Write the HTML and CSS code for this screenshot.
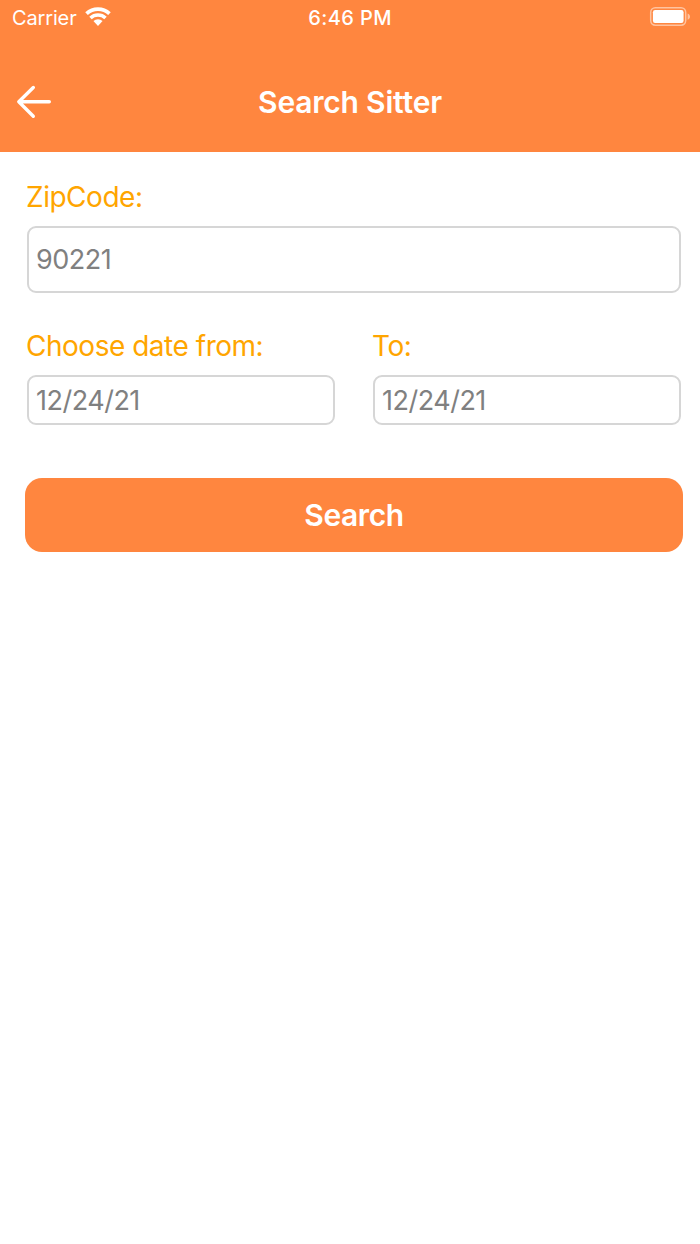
FILE: index.html
```html
<!DOCTYPE html>
<html lang="en">
<head>
    <meta charset="UTF-8">
    <meta name="viewport" content="width=device-width, initial-scale=1.0">
    <title>Search Sitter</title>
    <link rel="stylesheet" href="styles.css">
</head>
<body>
    <header class="header">
        <div class="status-bar">
            <div class="carrier">
                <span class="carrier-name">Carrier</span>
                <svg class="wifi" width="26" height="20" viewBox="0 0 26 20">
                    <g fill="#fff">
                        <path d="M0.250 5.300A18.700 18.700 0 0 1 25.750 5.300L23.160 8.100A14.900 14.900 0 0 0 2.840 8.100z"/>
                        <path d="M4.270 9.640A12.800 12.800 0 0 1 21.730 9.640L19.270 12.270A9.200 9.200 0 0 0 6.730 12.270z"/>
                        <path d="M8.430 14.100A6.700 6.700 0 0 1 17.570 14.100L13 19z"/>
                    </g>
                </svg>
            </div>
            <span class="time">6:46 PM</span>
            <svg class="battery" width="42" height="20" viewBox="0 0 42 20">
                <rect x="1.7" y="0.8" width="35" height="17.4" rx="4.6" fill="none" stroke="#fff" stroke-opacity="0.5" stroke-width="1.5"/>
                <rect x="3.900" y="3.100" width="30.700" height="12.800" rx="2.2" fill="#fff"/>
                <path d="M38.600 6.400c3.200 1.200 3.200 5.200 0 6.400z" fill="#fff" fill-opacity="0.5"/>
            </svg>
        </div>
        <div class="nav-bar">
            <a href="#" class="back-button" aria-label="Back">
                <svg width="36" height="36" viewBox="0 0 36 36">
                    <path d="M17.300 3.500L2.800 17.700L17.300 32.200M3 17.700H33.300" fill="none" stroke="#fff" stroke-width="3.400" stroke-linecap="round" stroke-linejoin="round"/>
                </svg>
            </a>
            <h1 class="title">Search Sitter</h1>
        </div>
    </header>

    <form class="search-form">
        <div class="field">
            <label for="zipCode">ZipCode:</label>
            <input class="zip" type="text" id="zipCode" value="90221">
        </div>
        <div class="dates">
            <div class="field">
                <label for="dateFrom">Choose date from:</label>
                <input type="text" id="dateFrom" value="12/24/21">
            </div>
            <div class="field">
                <label for="dateTo">To:</label>
                <input type="text" id="dateTo" value="12/24/21">
            </div>
        </div>
        <button class="search-button" type="button">Search</button>
    </form>
</body>
</html>
```
FILE: styles.css
```css
* {
    box-sizing: border-box;
}
body {
    margin: 0;
    background-color: white;
    font-family: Inter, sans-serif;
}
.header {
    height: 152px;
    background-color: #ff863f;
    color: white;
}
.status-bar {
    display: grid;
    grid-template-columns: 1fr auto 1fr;
    align-items: center;
    height: 36px;
    padding: 0 9px 0 12px;
    font-size: 20px;
}
.carrier {
    display: flex;
    align-items: center;
    gap: 8px;
    letter-spacing: -0.15px;
}
.wifi {
    margin-top: -2px;
}
.time {
    margin-left: -3px;
    font-weight: 500;
    letter-spacing: 0.4px;
}
.battery {
    justify-self: end;
    margin-top: -2px;
}
.nav-bar {
    display: grid;
    grid-template-columns: 52px 1fr 52px;
    align-items: center;
    height: 116px;
    padding: 16px 16px 0;
}
.back-button {
    display: flex;
}
.title {
    margin: 0;
    text-align: center;
    font-size: 30px;
    font-weight: 600;
    letter-spacing: -0.2px;
}
.search-form {
    padding: 28px 17px 0 25px;
}
.field {
    display: flex;
    flex-direction: column;
    padding: 0 2px;
}
label {
    height: 34px;
    margin: 0 0 12px -1px;
    line-height: 34px;
    font-size: 28px;
    letter-spacing: -0.48px;
    color: orange;
}
input {
    width: 100%;
    height: 50px;
    padding: 0 7px;
    border: 2px solid #d6d6d6;
    border-radius: 9px;
    background-color: white;
    font-family: inherit;
    font-size: 27px;
    letter-spacing: -0.5px;
    color: gray;
}
.zip {
    height: 67px;
}
.dates {
    display: grid;
    grid-template-columns: 1fr 1fr;
    gap: 34px;
    margin-top: 36px;
}
.search-button {
    width: 100%;
    height: 74px;
    margin-top: 53px;
    border: none;
    border-radius: 17px;
    background-color: #ff863f;
    color: white;
    font-family: inherit;
    font-size: 30px;
    font-weight: 600;
    letter-spacing: -0.4px;
}
```
